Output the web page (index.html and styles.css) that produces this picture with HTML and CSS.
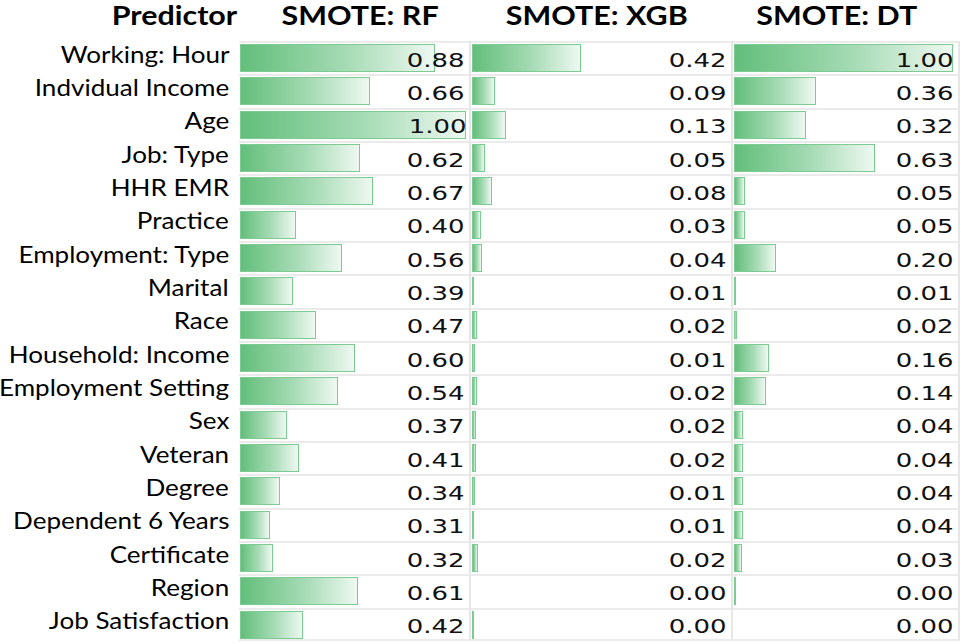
FILE: index.html
```html
<!DOCTYPE html>
<html>
<head>
<meta charset="utf-8">
<link rel="stylesheet" href="styles.css">
</head>
<body>
<div class="table">
  <div class="hd pred"><span class="ht">Predictor</span></div>
  <div class="hd rf"><span class="ht">SMOTE: RF</span></div>
  <div class="hd xgb"><span class="ht">SMOTE: XGB</span></div>
  <div class="hd dt"><span class="ht">SMOTE: DT</span></div>

  <div class="lbl"><span class="lt">Working: Hour</span></div>
  <div class="cell"><span class="bar" style="width:195px"></span><span class="num">0.88</span></div>
  <div class="cell"><span class="bar" style="width:109px"></span><span class="num">0.42</span></div>
  <div class="cell"><span class="bar" style="width:219px"></span><span class="num">1.00</span></div>

  <div class="lbl"><span class="lt">Indvidual Income</span></div>
  <div class="cell"><span class="bar" style="width:130px"></span><span class="num">0.66</span></div>
  <div class="cell"><span class="bar" style="width:23px"></span><span class="num">0.09</span></div>
  <div class="cell"><span class="bar" style="width:82px"></span><span class="num">0.36</span></div>

  <div class="lbl"><span class="lt">Age</span></div>
  <div class="cell"><span class="bar" style="width:226px"></span><span class="num">1.00</span></div>
  <div class="cell"><span class="bar" style="width:34px"></span><span class="num">0.13</span></div>
  <div class="cell"><span class="bar" style="width:72px"></span><span class="num">0.32</span></div>

  <div class="lbl"><span class="lt">Job: Type</span></div>
  <div class="cell"><span class="bar" style="width:120px"></span><span class="num">0.62</span></div>
  <div class="cell"><span class="bar" style="width:13px"></span><span class="num">0.05</span></div>
  <div class="cell"><span class="bar" style="width:141px"></span><span class="num">0.63</span></div>

  <div class="lbl"><span class="lt">HHR EMR</span></div>
  <div class="cell"><span class="bar" style="width:133px"></span><span class="num">0.67</span></div>
  <div class="cell"><span class="bar" style="width:20px"></span><span class="num">0.08</span></div>
  <div class="cell"><span class="bar" style="width:11px"></span><span class="num">0.05</span></div>

  <div class="lbl"><span class="lt">Practice</span></div>
  <div class="cell"><span class="bar" style="width:56px"></span><span class="num">0.40</span></div>
  <div class="cell"><span class="bar" style="width:9px"></span><span class="num">0.03</span></div>
  <div class="cell"><span class="bar" style="width:11px"></span><span class="num">0.05</span></div>

  <div class="lbl"><span class="lt">Employment: Type</span></div>
  <div class="cell"><span class="bar" style="width:102px"></span><span class="num">0.56</span></div>
  <div class="cell"><span class="bar" style="width:10px"></span><span class="num">0.04</span></div>
  <div class="cell"><span class="bar" style="width:42px"></span><span class="num">0.20</span></div>

  <div class="lbl"><span class="lt">Marital</span></div>
  <div class="cell"><span class="bar" style="width:53px"></span><span class="num">0.39</span></div>
  <div class="cell"><span class="bar" style="width:2px"></span><span class="num">0.01</span></div>
  <div class="cell"><span class="bar" style="width:2px"></span><span class="num">0.01</span></div>

  <div class="lbl"><span class="lt">Race</span></div>
  <div class="cell"><span class="bar" style="width:76px"></span><span class="num">0.47</span></div>
  <div class="cell"><span class="bar" style="width:5px"></span><span class="num">0.02</span></div>
  <div class="cell"><span class="bar" style="width:3px"></span><span class="num">0.02</span></div>

  <div class="lbl"><span class="lt">Household: Income</span></div>
  <div class="cell"><span class="bar" style="width:115px"></span><span class="num">0.60</span></div>
  <div class="cell"><span class="bar" style="width:3px"></span><span class="num">0.01</span></div>
  <div class="cell"><span class="bar" style="width:35px"></span><span class="num">0.16</span></div>

  <div class="lbl"><span class="lt">Employment Setting</span></div>
  <div class="cell"><span class="bar" style="width:98px"></span><span class="num">0.54</span></div>
  <div class="cell"><span class="bar" style="width:5px"></span><span class="num">0.02</span></div>
  <div class="cell"><span class="bar" style="width:32px"></span><span class="num">0.14</span></div>

  <div class="lbl"><span class="lt">Sex</span></div>
  <div class="cell"><span class="bar" style="width:47px"></span><span class="num">0.37</span></div>
  <div class="cell"><span class="bar" style="width:4px"></span><span class="num">0.02</span></div>
  <div class="cell"><span class="bar" style="width:9px"></span><span class="num">0.04</span></div>

  <div class="lbl"><span class="lt">Veteran</span></div>
  <div class="cell"><span class="bar" style="width:59px"></span><span class="num">0.41</span></div>
  <div class="cell"><span class="bar" style="width:4px"></span><span class="num">0.02</span></div>
  <div class="cell"><span class="bar" style="width:9px"></span><span class="num">0.04</span></div>

  <div class="lbl"><span class="lt">Degree</span></div>
  <div class="cell"><span class="bar" style="width:40px"></span><span class="num">0.34</span></div>
  <div class="cell"><span class="bar" style="width:3px"></span><span class="num">0.01</span></div>
  <div class="cell"><span class="bar" style="width:9px"></span><span class="num">0.04</span></div>

  <div class="lbl"><span class="lt">Dependent 6 Years</span></div>
  <div class="cell"><span class="bar" style="width:30px"></span><span class="num">0.31</span></div>
  <div class="cell"><span class="bar" style="width:2px"></span><span class="num">0.01</span></div>
  <div class="cell"><span class="bar" style="width:9px"></span><span class="num">0.04</span></div>

  <div class="lbl"><span class="lt">Certificate</span></div>
  <div class="cell"><span class="bar" style="width:33px"></span><span class="num">0.32</span></div>
  <div class="cell"><span class="bar" style="width:6px"></span><span class="num">0.02</span></div>
  <div class="cell"><span class="bar" style="width:8px"></span><span class="num">0.03</span></div>

  <div class="lbl"><span class="lt">Region</span></div>
  <div class="cell"><span class="bar" style="width:118px"></span><span class="num">0.61</span></div>
  <div class="cell"><span class="bar" style="width:0px;border:0"></span><span class="num">0.00</span></div>
  <div class="cell"><span class="bar" style="width:2px"></span><span class="num">0.00</span></div>

  <div class="lbl"><span class="lt">Job Satisfaction</span></div>
  <div class="cell last"><span class="bar" style="width:63px"></span><span class="num">0.42</span></div>
  <div class="cell last"><span class="bar" style="width:2px"></span><span class="num">0.00</span></div>
  <div class="cell last"><span class="bar" style="width:0px;border:0"></span><span class="num">0.00</span></div>
</div>
</body>
</html>
```

FILE: styles.css
```css
html, body {
  margin: 0;
  padding: 0;
  background: #ffffff;
}

.table {
  display: grid;
  grid-template-columns: 239px 232px 262px 227px;
  grid-template-rows: 41px;
  grid-auto-rows: 33.333px;
  width: 960px;
}

.hd {
  font-family: "Lato", "Liberation Sans", sans-serif;
  font-weight: 700;
  font-size: 26px;
  line-height: 31px;
  color: #000;
  display: flex;
  align-items: flex-start;
  justify-content: center;
}

.ht {
  display: inline-block;
  transform: scaleX(1.17);
  transform-origin: center top;
  white-space: nowrap;
}

.hd.pred {
  justify-content: flex-end;
  padding-right: 2px;
}

.hd.pred .ht {
  transform-origin: right top;
  transform: scaleX(1.17);
}

.hd.rf { padding-left: 10px; }
.hd.xgb { padding-right: 10px; }
.hd.dt { padding-right: 19px; }

.lbl {
  font-family: "Lato", "Liberation Sans", sans-serif;
  font-size: 24px;
  color: #000;
  display: flex;
  align-items: center;
  justify-content: flex-end;
  padding-right: 10px;
  padding-bottom: 9px;
  white-space: nowrap;
}

.lt {
  display: inline-block;
  transform: scaleX(1.085);
  transform-origin: right center;
}

.cell {
  display: grid;
  grid-template-columns: 1fr;
  border-top: 2px solid #ebebeb;
  border-right: 2px solid #e6e6e6;
  padding: 1px 5px 2px 1px;
  box-sizing: border-box;
  overflow: hidden;
}

.cell.last {
  border-bottom: 2px solid #ebebeb;
  padding-bottom: 0;
}

.bar {
  grid-area: 1 / 1;
  justify-self: start;
  align-self: center;
  height: 28px;
  box-sizing: border-box;
  border: 1.5px solid #7ccb93;
  background: linear-gradient(to right, #63be7b 0%, #a6dbb5 55%, #eef8f1 100%);
}

.num {
  grid-area: 1 / 1;
  justify-self: end;
  align-self: center;
  font-family: "DejaVu Sans", "Verdana", sans-serif;
  font-size: 19.5px;
  color: #111;
  transform: scaleX(1.33);
  transform-origin: right center;
  padding-top: 4px;
}
```
